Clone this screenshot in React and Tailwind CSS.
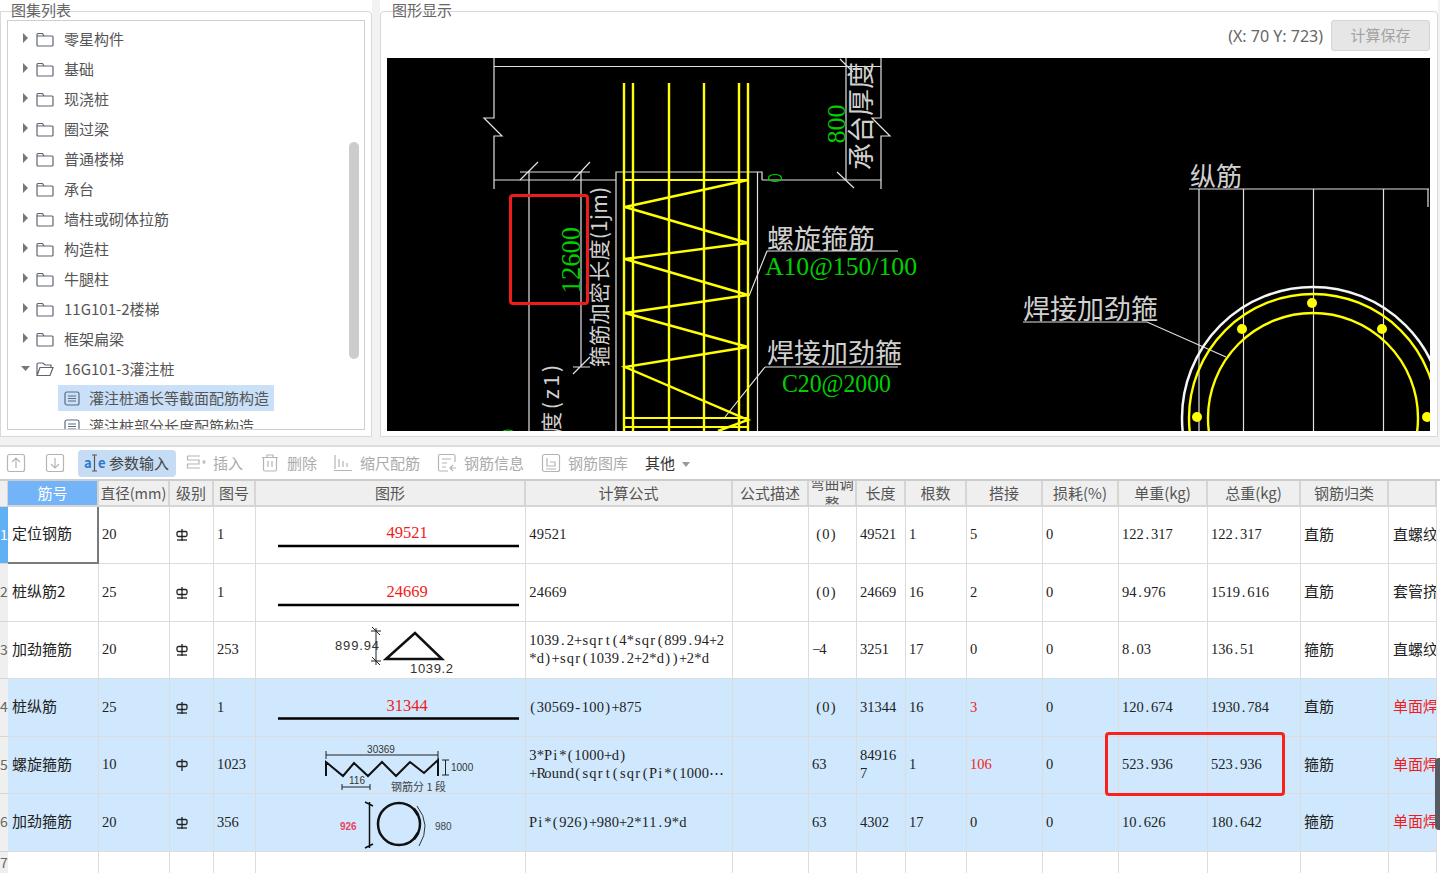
import { Fragment } from 'react';

const tree = ['零星构件', '基础', '现浇桩', '圈过梁', '普通楼梯', '承台', '墙柱或砌体拉筋', '构造柱', '牛腿柱', '11G101-2楼梯', '框架扁梁'];

const headers = ['筋号', '直径(mm)', '级别', '图号', '图形', '计算公式', '公式描述', '弯曲调\n整', '长度', '根数', '搭接', '损耗(%)', '单重(kg)', '总重(kg)', '钢筋归类', ''];

const rows = [
  { name: '定位钢筋', d: '20', no: '1', formula: '49521', bend: '(0)', len: '49521', count: '1', lap: '5', unit: '122.317', total: '122.317', kind: '直筋', joint: '直螺纹连接' },
  { name: '桩纵筋2', d: '25', no: '1', formula: '24669', bend: '(0)', len: '24669', count: '16', lap: '2', unit: '94.976', total: '1519.616', kind: '直筋', joint: '套管挤压' },
  { name: '加劲箍筋', d: '20', no: '253', formula: '1039.2+sqrt(4*sqr(899.94+2\n*d)+sqr(1039.2+2*d))+2*d', bend: '−4', len: '3251', count: '17', lap: '0', unit: '8.03', total: '136.51', kind: '箍筋', joint: '直螺纹连接' },
  { name: '桩纵筋', d: '25', no: '1', formula: '(30569-100)+875', bend: '(0)', len: '31344', count: '16', lap: '3', unit: '120.674', total: '1930.784', kind: '直筋', joint: '单面焊', blue: true, red: true },
  { name: '螺旋箍筋', d: '10', no: '1023', formula: '3*Pi*(1000+d)\n+Round(sqrt(sqr(Pi*(1000⋯', bend: '63', len: '84916\n7', count: '1', lap: '106', unit: '523.936', total: '523.936', kind: '箍筋', joint: '单面焊', blue: true, red: true, plain: true },
  { name: '加劲箍筋', d: '20', no: '356', formula: 'Pi*(926)+980+2*11.9*d', bend: '63', len: '4302', count: '17', lap: '0', unit: '10.626', total: '180.642', kind: '箍筋', joint: '单面焊', blue: true, jointRed: true },
];

const gridCols = 'grid grid-cols-[8px_91px_71px_44px_42px_270px_207px_76px_48px_49px_61px_76px_76px_89px_93px_88px_48px_3px]';
const serif = "font-['Liberation_Serif',serif]";
const sans = "font-['Liberation_Sans',sans-serif]";

function Folder({ open }) {
  return (
    <svg width="18" height="15" viewBox="0 0 18 15" fill="none" stroke="#5f6470" strokeWidth="1.2">
      {open ? (
        <path d="M1 13V2.5Q1 1 2.5 1H7L9 3H15V5.5M1 13.5H14L17 5.5H4Z" />
      ) : (
        <path d="M1 3V13Q1 14 2 14H16Q17 14 17 13V5Q17 4 16 4H8L6.5 1.500H2Q1 1.500 1 3ZM1 4H8" />
      )}
    </svg>
  );
}

function DocIcon() {
  return (
    <svg width="16" height="15" viewBox="0 0 16 15" fill="none" stroke="#5b6b85" strokeWidth="1.2">
      <rect x="1" y="1" width="14" height="13" rx="2" />
      <path d="M4 5H12M4 7.500H12M4 10H12" />
    </svg>
  );
}

function TreeRow({ label, open }) {
  return (
    <div className="flex items-center h-[30px] pl-[13px] text-[15px] text-[#555]">
      <svg width="10" height="10" viewBox="0 0 10 10" className="mr-[5px] -mt-[3px]" fill="#777">
        {open ? <path d="M0 3H9L4.500 8Z" /> : <path d="M2 0L7 5L2 10Z" />}
      </svg>
      <Folder open={open} />
      <span className="ml-[10px] whitespace-nowrap">{label}</span>
    </div>
  );
}

function TreePanel() {
  return (
    <div className="w-[372px] h-[437px] bg-white pt-[11px] shrink-0">
      <div className="relative h-full border border-[#d8d8d8] rounded-tr-sm px-[6px] pt-[8px] pb-[6px]">
        <span className="absolute left-[10px] -top-[12px] text-[15px] leading-[20px] text-[#666]">图集列表</span>
        <div className="relative h-full border border-[#cfcfcf] overflow-hidden pt-[3px]">
          {tree.map((t) => (
            <TreeRow key={t} label={t} />
          ))}
          <TreeRow label="16G101-3灌注桩" open />
          <div className="flex items-center ml-[50px] w-[216px] h-[26px] mt-[1px] bg-[#c9e0f8] pl-[6px] text-[15px] text-[#555] whitespace-nowrap">
            <DocIcon />
            <span className="ml-[9px]">灌注桩通长等截面配筋构造</span>
          </div>
          <div className="flex items-center ml-[50px] h-[26px] mt-[2px] pl-[6px] text-[15px] text-[#555] whitespace-nowrap">
            <DocIcon />
            <span className="ml-[9px]">灌注桩部分长度配筋构造</span>
          </div>
          <div className="absolute right-[5px] top-[121px] w-[10px] h-[217px] rounded-full bg-[#cccccc]" />
        </div>
      </div>
    </div>
  );
}

// canvas drawing, coordinates are page pixels through the viewBox
function CadDrawing() {
  const yellowBars = [624, 633, 669, 704, 739, 748];
  const cad = "font-['Noto_Sans_CJK_SC',sans-serif] fill-[#d0d0d0]";
  const num = `${serif} fill-[#00d000]`;
  return (
    <svg className="block w-full h-full" viewBox="387 58 1043 373" fill="none">
      <g className="stroke-[#e2e2e2]" strokeWidth="1.200">
        <path d="M494 58V118H484L502 136H494V189" />
        <path d="M494 66.500H881M494 180H616M762 180H881" />
        <path d="M881 58V118H872L890 136H881V189" />
        <path d="M846 58V180M840 59L853 72M837 172L854 188" />
        <path d="M616 431V172H757.500V431M757.500 172H762V180" />
        <path d="M529 172V431M581 172V367M520 172H590M520 180L538 162M573 180L590 162M573 367H590M573 374L590 357" />
        <path d="M767 251H898M767 251L749 296M765 367H898M765 367L725 417" />
        <path d="M1189 189H1429M1199 189V431M1243.500 189V431M1313.500 189V431M1383.500 189V431M1428 189V207" />
        <path d="M1023 322H1147L1226 357" />
      </g>
      <g className="stroke-[#ffff00]" strokeWidth="2.400">
        {yellowBars.map((x) => (
          <path key={x} d={`M${x} 83V431`} />
        ))}
        <path d="M624 180H748M624 418H748M624 427H748" strokeWidth="1.800" />
        <path d="M748 180L625 207L748 243L625 259L748 295L625 313L748 347L625 367L748 420L718 431" />
        <circle cx="1313" cy="418" r="124" />
        <circle cx="1313" cy="418" r="105" />
      </g>
      <circle cx="1313" cy="418" r="131" className="stroke-[#f5f5f5]" strokeWidth="2.500" />
      <g className="fill-[#ffff00]">
        <circle cx="1312" cy="303" r="5" />
        <circle cx="1242" cy="329" r="5" />
        <circle cx="1382" cy="329" r="5" />
        <circle cx="1197" cy="417" r="5" />
        <circle cx="1427" cy="417" r="5" />
      </g>
      <ellipse cx="775" cy="178" rx="6.500" ry="3.500" className="stroke-[#00d000]" strokeWidth="1.200" />
      <ellipse cx="508" cy="432" rx="5" ry="2" className="stroke-[#00d000]" strokeWidth="1.200" />

      <text x="0" y="0" fontSize="26" textAnchor="middle" className={num} transform="translate(845 124) rotate(-90)">800</text>
      <text x="0" y="0" fontSize="26.500" textAnchor="middle" className={num} transform="translate(580 260) rotate(-90)">12600</text>
      <text x="765" y="275" fontSize="26" textLength="152" lengthAdjust="spacingAndGlyphs" className={num}>A10@150/100</text>
      <text x="782" y="392" fontSize="25" textLength="109" lengthAdjust="spacingAndGlyphs" className={num}>C20@2000</text>

      <text x="767" y="249" fontSize="27" className={cad}>螺旋箍筋</text>
      <text x="767" y="363" fontSize="27" className={cad}>焊接加劲箍</text>
      <text x="1190" y="186" fontSize="26" className={cad}>纵筋</text>
      <text x="1023" y="319" fontSize="27" className={cad}>焊接加劲箍</text>
      <text x="0" y="0" fontSize="27" textAnchor="middle" className={cad} transform="translate(871 116) rotate(-90)">承台厚度</text>
      <text x="0" y="0" fontSize="21" textLength="180" className={cad} transform="translate(607 367) rotate(-90)">箍筋加密长度(1jm)</text>
      <text x="0" y="0" fontSize="21" textLength="68" className={cad} transform="translate(559 433) rotate(-90)">度(z1)</text>
    </svg>
  );
}

function DrawPanel() {
  return (
    <div className="w-[1058px] h-[437px] bg-white pt-[11px] shrink-0">
      <div className="relative h-full border border-[#d8d8d8] rounded-t-sm">
        <span className="absolute left-[11px] -top-[12px] text-[15px] leading-[20px] text-[#666]">图形显示</span>
        <div className="flex items-center justify-end h-[46px] pr-[7px] pt-[1px]">
          <span className="font-['Noto_Sans',sans-serif] text-[16px] text-[#666] mr-[8px]">(X: 70 Y: 723)</span>
          <button className="w-[99px] h-[31px] bg-[#e6e6e6] border border-[#d2d5dc] rounded-[3px] text-[15px] text-[#a3a3a3]">计算保存</button>
        </div>
        <div className="ml-[6px] w-[1043px] h-[373px] bg-black overflow-hidden">
          <CadDrawing />
        </div>
      </div>
    </div>
  );
}

function ToolIcon({ children, className = '' }) {
  return (
    <svg width="20" height="20" viewBox="0 0 20 20" fill="none" stroke="#b5b5b5" strokeWidth="1.200" className={className}>
      {children}
    </svg>
  );
}

function ToolItem({ label, icon, className = '' }) {
  return (
    <div className={`flex items-center text-[15px] text-[#ababab] whitespace-nowrap ${className}`}>
      {icon}
      <span className="ml-[7px]">{label}</span>
    </div>
  );
}

function Toolbar() {
  return (
    <div className="flex items-center h-[32px] bg-white border-t-2 border-[#dcdcdc] box-content pl-[6px]">
      <ToolIcon>
        <rect x="1.500" y="1.500" width="17" height="17" rx="2" />
        <path d="M10 15V5M6 9L10 5L14 9" />
      </ToolIcon>
      <ToolIcon className="ml-[19px]">
        <rect x="1.500" y="1.500" width="17" height="17" rx="2" />
        <path d="M10 5V15M6 11L10 15L14 11" />
      </ToolIcon>
      <div className="flex items-center ml-[13px] w-[98px] h-[27px] rounded-[4px] bg-[#c6dcf4] pl-[5px] text-[15px] text-[#444] whitespace-nowrap">
        <svg width="24" height="20" viewBox="0 0 24 20" fill="none">
          <text x="1" y="15" fontSize="13" fontWeight="700" className="fill-[#2f76c9]">a</text>
          <text x="15" y="15" fontSize="13" fontWeight="700" className="fill-[#2f76c9]">e</text>
          <path d="M9 2H14M9 18H14M11.500 2V18" stroke="#555" strokeWidth="1.200" />
        </svg>
        <span className="ml-[2px]">参数输入</span>
      </div>
      <ToolItem
        label="插入"
        className="ml-[10px]"
        icon={
          <ToolIcon>
            <path d="M1.500 3H14M1.500 3V7H13V11H1.500V15H14M16 9H19M17.500 7L19 9L17.500 11" />
          </ToolIcon>
        }
      />
      <ToolItem
        label="删除"
        className="ml-[17px]"
        icon={
          <ToolIcon>
            <path d="M2 4.500H18M7 4.500V2H13V4.500M3.500 4.500V16.500Q3.500 18 5 18H15Q16.500 18 16.500 16.500V4.500M8 8V14M12 8V14" />
          </ToolIcon>
        }
      />
      <ToolItem
        label="缩尺配筋"
        className="ml-[16px]"
        icon={
          <ToolIcon>
            <path d="M2 2V16M6 6V14M10 8V14M14 10V14M1 17.500H19" />
          </ToolIcon>
        }
      />
      <ToolItem
        label="钢筋信息"
        className="ml-[17px]"
        icon={
          <ToolIcon>
            <path d="M18 9V3Q18 1.500 16.500 1.500H3Q1.500 1.500 1.500 3V16.500Q1.500 18 3 18H11M5 6H14M5 10H10M5 14H9M13 15H19M16 12L13 15L16 18" />
          </ToolIcon>
        }
      />
      <ToolItem
        label="钢筋图库"
        className="ml-[17px]"
        icon={
          <ToolIcon>
            <rect x="1.500" y="1.500" width="17" height="17" rx="2" />
            <path d="M6 5V13H14V9H9M5 16H15" />
          </ToolIcon>
        }
      />
      <span className="ml-[17px] text-[15px] text-[#333]">其他</span>
      <svg width="8" height="5" viewBox="0 0 8 5" className="ml-[7px] mt-[2px]" fill="#999">
        <path d="M0 0H8L4 5Z" />
      </svg>
    </div>
  );
}

function Grade({ plain }) {
  return (
    <svg width="14" height="14" viewBox="0 0 14 14" fill="none" stroke="#222" strokeWidth="1.300">
      <rect x="2" y="3.500" width="10" height="5" rx="1.500" />
      <path d="M7 1V13" />
      {!plain && <path d="M2 12H12" />}
    </svg>
  );
}

// fixed pitch characters, the source grid uses a narrow fixed font
function Pitch({ text, wide }) {
  return text.split('\n').map((line, i) => (
    <div key={i} className="whitespace-nowrap">
      {[...line].map((ch, j) => (
        <span key={j} className={`inline-block text-center ${wide ? 'w-[7.500px]' : 'w-[7.250px]'}`}>
          {ch}
        </span>
      ))}
    </div>
  ));
}

// drawings inside the 图形 column, viewBox = page pixels of the cell
function StraightBar({ value, top, text, line }) {
  return (
    <svg className="block w-[269px] h-[56px]" viewBox={`256 ${top} 269 56`} fill="none">
      <text x="407" y={text} fontSize="16.500" textAnchor="middle" className={`${serif} fill-[#f01c1c]`}>{value}</text>
      <path d={`M278 ${line}H519`} stroke="#000" strokeWidth="2.500" />
    </svg>
  );
}

function TriangleShape() {
  return (
    <svg className="block w-[269px] h-[56px]" viewBox="256 622 269 56" fill="none">
      <path d="M386 659L415 633L442 659Z" stroke="#111" strokeWidth="2.500" />
      <path d="M376 628V665M371 631H381M371 661H381M372 627L380 635M372 657L380 665" stroke="#222" strokeWidth="1" />
      <text x="335" y="650" fontSize="13" textLength="44" className={`${sans} fill-[#333]`}>899.94</text>
      <text x="410" y="673" fontSize="13" textLength="43" className={`${sans} fill-[#333]`}>1039.2</text>
    </svg>
  );
}

function SpiralShape() {
  return (
    <svg className="block w-[269px] h-[56px]" viewBox="256 737 269 56" fill="none">
      <path d="M326 755H438M326 751V759M438 751V759" stroke="#222" strokeWidth="1" />
      <path d="M326 776V762L343 776L354 763L368 776L382 762L396 776L410 762L424 773L438 760V776" stroke="#111" strokeWidth="2" />
      <path d="M442 760H449M442 775H449M445.500 760V775M342 787H370M342 784V790M370 784V790" stroke="#222" strokeWidth="1" />
      <text x="381" y="753" fontSize="10" textAnchor="middle" className={`${sans} fill-[#333]`}>30369</text>
      <text x="451" y="771" fontSize="10" className={`${sans} fill-[#333]`}>1000</text>
      <text x="349" y="784" fontSize="10" className={`${sans} fill-[#333]`}>116</text>
      <text x="391" y="791" fontSize="11" className="fill-[#444]">钢筋分 1 段</text>
    </svg>
  );
}

function RingShape() {
  return (
    <svg className="block w-[269px] h-[56px]" viewBox="256 795 269 56" fill="none">
      <path d="M369.500 802V848M365 802L373 806M365 848L373 844" stroke="#111" strokeWidth="1.500" />
      <circle cx="399" cy="824" r="21" stroke="#111" strokeWidth="2.500" />
      <path d="M414 809L418 815M414 839L418 833" stroke="#111" strokeWidth="3" />
      <path d="M417 806Q432 825 419 846" stroke="#333" strokeWidth="1" />
      <text x="340" y="830" fontSize="10" className={`${sans} fill-[#f04060] font-semibold`}>926</text>
      <text x="435" y="830" fontSize="10" className={`${sans} fill-[#444]`}>980</text>
    </svg>
  );
}

function Shape({ index }) {
  if (index === 0) return <StraightBar value="49521" top={507} text={538} line={546} />;
  if (index === 1) return <StraightBar value="24669" top={564} text={596} line={604} />;
  if (index === 2) return <TriangleShape />;
  if (index === 3) return <StraightBar value="31344" top={680} text={711} line={718.500} />;
  if (index === 4) return <SpiralShape />;
  return <RingShape />;
}

function Cell({ row, className = '', children }) {
  return (
    <div className={`flex items-center overflow-hidden ${row.blue ? 'bg-[#cfe8fd]' : 'bg-white'} ${className}`}>
      {children}
    </div>
  );
}

const line = 'border-r border-b border-[#dcdcdc]';

function NumCell({ row, children, wide, red, indent }) {
  return (
    <Cell row={row} className={`${line} ${serif} text-[14.500px] leading-[18px] pb-[2px] ${indent ? 'pl-[6px]' : 'pl-[3px]'} ${red ? 'text-[#f01c1c]' : 'text-[#222]'}`}>
      <div>
        <Pitch text={children} wide={wide} />
      </div>
    </Cell>
  );
}

function DataTable() {
  return (
    <div className={`${gridCols} grid-rows-[26px_57px_58px_57px_58px_57px_58px_30px] border-t-2 border-[#cccccc] bg-white`}>
      <div className="bg-[#efefef] border-r border-b border-[#d5d5d5]" />
      {headers.map((h, i) => (
        <div
          key={i}
          className={`flex items-center justify-center text-center border-r-2 border-b-2 border-[#d5d5d5] overflow-hidden whitespace-pre ${
            i === 0 ? 'bg-[#73b4f8] text-white' : 'bg-[#efefef] text-[#555]'
          } ${i === 7 ? 'text-[14.500px] leading-[20px]' : i === 1 ? 'text-[14.500px] leading-[16px]' : 'text-[15px] leading-[16px]'}`}
        >
          {h}
        </div>
      ))}
      <div className="bg-white" />

      {rows.map((r, i) => (
        <Fragment key={i}>
          <div className={`flex items-center justify-center text-[14px] pb-[2px] border-b border-[#d5d5d5] overflow-hidden ${i === 0 ? 'bg-[#5fb0f5] text-white' : 'bg-[#efefef] text-[#666]'}`}>
            {i + 1}
          </div>
          <Cell row={r} className={`text-[15px] text-[#222] whitespace-nowrap pl-[4px] pb-[2px] ${i === 0 ? 'border-r-2 border-b-2 border-[#7a7a7a]' : line}`}>
            {r.name}
          </Cell>
          <NumCell row={r}>{r.d}</NumCell>
          <Cell row={r} className={`${line} pl-[5px]`}>
            <Grade plain={r.plain} />
          </Cell>
          <NumCell row={r}>{r.no}</NumCell>
          <Cell row={r} className={line}>
            <Shape index={i} />
          </Cell>
          <NumCell row={r} wide>{r.formula}</NumCell>
          <Cell row={r} className={line} />
          <NumCell row={r} indent={r.bend.startsWith('(')}>{r.bend}</NumCell>
          <NumCell row={r}>{r.len}</NumCell>
          <NumCell row={r}>{r.count}</NumCell>
          <NumCell row={r} red={r.red}>{r.lap}</NumCell>
          <NumCell row={r}>0</NumCell>
          <NumCell row={r}>{r.unit}</NumCell>
          <NumCell row={r}>{r.total}</NumCell>
          <Cell row={r} className={`${line} text-[15px] text-[#222] pl-[3px] pb-[2px]`}>{r.kind}</Cell>
          <Cell row={r} className={`${line} text-[15px] pl-[4px] pb-[2px] whitespace-nowrap ${r.red || r.jointRed ? 'text-[#f01c1c]' : 'text-[#222]'}`}>{r.joint}</Cell>
          <div className="bg-white" />
        </Fragment>
      ))}

      <div className="flex items-start justify-center text-[14px] bg-[#efefef] text-[#666] overflow-hidden">7</div>
      {headers.map((_, i) => (
        <div key={i} className="border-r border-[#dcdcdc] bg-white" />
      ))}
      <div className="bg-white" />
    </div>
  );
}

export default function App() {
  return (
    <div className="relative w-[1440px] h-[873px] overflow-hidden bg-white font-['Noto_Sans_CJK_SC','Noto_Sans',sans-serif]">
      <div className="flex gap-[8px] h-[445px] bg-[#f2f2f2]">
        <TreePanel />
        <DrawPanel />
      </div>
      <Toolbar />
      <DataTable />

      {/* red annotation boxes and the floating handle */}
      <div className="absolute left-[509px] top-[194px] w-[80px] h-[111px] border-[3px] border-[#f01c1c] rounded-[4px]" />
      <div className="absolute left-[1105px] top-[732px] w-[180px] h-[64px] border-[3px] border-[#f8221a] rounded-[4px]" />
      <div className="absolute left-[1435px] top-[758px] w-[5px] h-[72px] bg-[#555a63] rounded-l-sm" />
    </div>
  );
}
